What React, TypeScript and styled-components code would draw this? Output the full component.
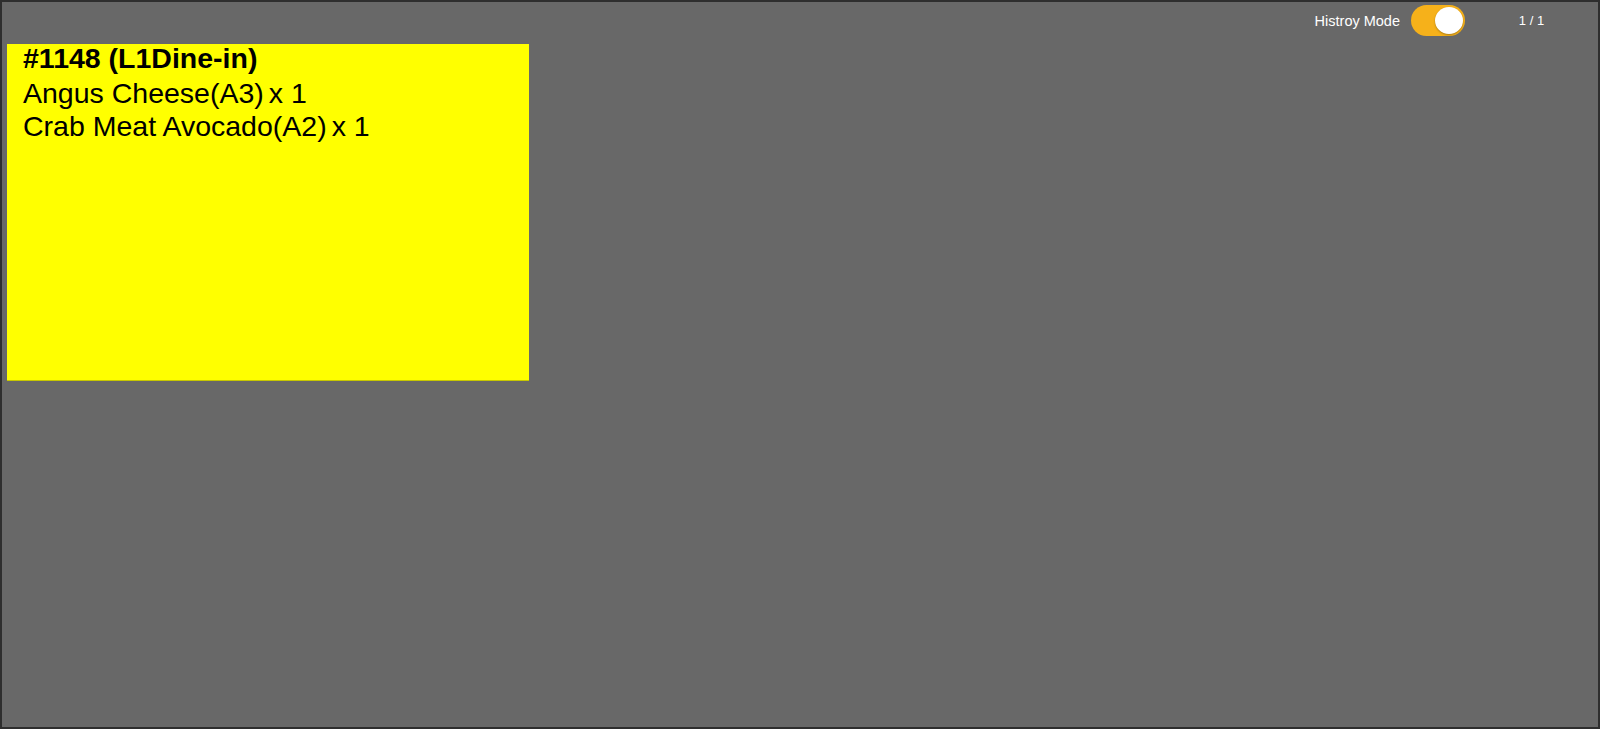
import React, { useState } from "react";
import styled, { createGlobalStyle } from "styled-components";

const GlobalStyle = createGlobalStyle`
  html, body {
    margin: 0;
    padding: 0;
    background: #ffffff;
  }
  body {
    font-family: "Liberation Sans", Arial, sans-serif;
  }
`;

const orders = [
  {
    id: 1148,
    title: "#1148 (L1Dine-in)",
    items: [
      { name: "Angus Cheese(A3)", qty: 1 },
      { name: "Crab Meat Avocado(A2)", qty: 1 },
    ],
  },
];

const App = () => {
  const [history, setHistory] = useState<boolean>(true);

  return (
    <>
      <GlobalStyle />
      <Screen>
        <TopBar>
          <ModeLabel>Histroy Mode</ModeLabel>
          <Toggle $on={history} onClick={() => setHistory((prev) => !prev)}>
            <Knob $on={history} />
          </Toggle>
          <Pager>1 / 1</Pager>
        </TopBar>
        <OrderGrid>
          {orders.map((order) => (
            <OrderCard key={order.id}>
              <OrderTitle>{order.title}</OrderTitle>
              {order.items.map((item) => (
                <ItemLine key={item.name}>
                  <span>{item.name}</span>
                  <Qty>x {item.qty}</Qty>
                </ItemLine>
              ))}
            </OrderCard>
          ))}
        </OrderGrid>
      </Screen>
    </>
  );
};

const Screen = styled.div`
  box-sizing: border-box;
  width: 1600px;
  height: 729px;
  border: 2px solid #2e2e2e;
  background: #686868;
  display: flex;
  flex-direction: column;
`;

const TopBar = styled.div`
  box-sizing: border-box;
  height: 42px;
  padding-bottom: 5px;
  display: flex;
  flex-direction: row;
  justify-content: flex-end;
  align-items: center;
`;

const ModeLabel = styled.span`
  color: #ffffff;
  font-size: 14.5px;
  margin-right: 11px;
`;

const Toggle = styled.div<{ $on: boolean }>`
  position: relative;
  width: 54px;
  height: 31px;
  border-radius: 16px;
  background: ${(p) => (p.$on ? "#f6b11a" : "#bdbdbd")};
  cursor: pointer;
`;

const Knob = styled.div<{ $on: boolean }>`
  position: absolute;
  top: 2px;
  left: ${(p) => (p.$on ? "24px" : "2px")};
  width: 28px;
  height: 27px;
  border-radius: 50%;
  background: #ffffff;
  box-shadow: 0 1px 2px rgba(0, 0, 0, 0.3);
`;

const Pager = styled.span`
  width: 133px;
  text-align: center;
  color: #ffffff;
  font-size: 13px;
`;

const OrderGrid = styled.div`
  padding: 0 5px;
  display: grid;
  grid-template-columns: 522px;
  gap: 5px;
`;

const OrderCard = styled.div`
  box-sizing: border-box;
  height: 337px;
  background: #ffff00;
  border-bottom: 1px solid #c8c800;
  padding: 0 16px;
  color: #000000;
  font-size: 28.5px;
  line-height: 33.5px;
`;

const OrderTitle = styled.div`
  font-weight: bold;
  line-height: 29px;
  margin-bottom: 3.5px;
`;

const ItemLine = styled.div`
  display: flex;
  gap: 5px;
`;

const Qty = styled.span``;

export default App;
